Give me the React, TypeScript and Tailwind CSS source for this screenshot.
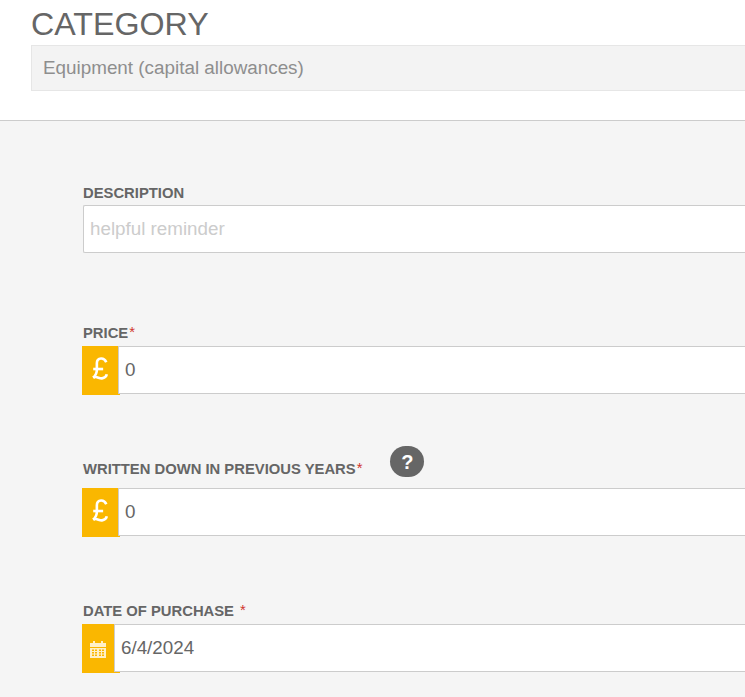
const font = { fontFamily: '"Liberation Sans", Arial, sans-serif' };

function Label({ text, star, gap }: { text: string; star?: boolean; gap?: boolean }) {
  return (
    <div className="flex h-[18px] items-center text-[14.8px] font-bold leading-[18px] text-[#666666]">
      <span>{text}</span>
      {star && (
        <span className={`font-normal text-[#d0342c] ${gap ? "ml-[6px]" : "ml-[1px]"} -mt-[3px]`}>*</span>
      )}
    </div>
  );
}

function PoundIcon() {
  return (
    <svg width="16" height="23" viewBox="0 0 15 22" fill="none" stroke="#ffffff" strokeWidth="2.500">
      <path d="M13.500 5C12.500 2.500 10.500 1.300 8.500 1.400C6 1.500 4.500 3.500 4.500 6V12C4.500 15 3.500 17.500 1 19.800" />
      <path d="M1 11.500H10.500" />
      <path d="M1 19.800C4 17.800 6.500 20.800 9.500 20.400C11.800 20.200 13.500 19 14 16.500" />
    </svg>
  );
}

function PoundInput() {
  return (
    <div className="flex">
      <div className="flex h-[49px] w-[38px] shrink-0 items-center justify-center bg-[#fab700] pb-[5px] pr-[2px] text-white">
        <PoundIcon />
      </div>
      <input
        readOnly
        value="0"
        className="relative -ml-[2px] h-[48px] min-w-0 flex-1 border border-r-0 border-[#cccccc] bg-white px-[6px] text-[18.8px] text-[#666666] outline-none"
      />
    </div>
  );
}

export default function App() {
  return (
    <div className="h-[697px] w-[745px] overflow-hidden bg-[#f5f5f5]" style={font}>
      <div className="h-[121px] border-b border-[#cccccc] bg-white pl-[31px]">
        <div className="h-[45px] pt-[6px] text-[32.2px] leading-[36px] text-[#666666]">CATEGORY</div>
        <div className="flex h-[46px] items-center border border-r-0 border-[#e6e6e6] bg-[#f3f3f3] pl-[11px] text-[18.850px] text-[#8e8e8e]">
          Equipment (capital allowances)
        </div>
      </div>

      <div className="pl-[83px]">
        <div className="pt-[63px]">
          <Label text="DESCRIPTION" />
          <input
            readOnly
            placeholder="helpful reminder"
            className="mt-[3px] block h-[48px] w-full rounded-l-[2px] border border-r-0 border-[#cccccc] bg-white px-[6px] text-[18.8px] text-[#666666] outline-none placeholder:text-[#cccccc]"
          />
        </div>

        <div className="-ml-[1px] pt-[71px]">
          <div className="pl-[1px]">
            <Label text="PRICE" star />
          </div>
          <div className="mt-[4px]">
            <PoundInput />
          </div>
        </div>

        <div className="-ml-[1px] pt-[51px]">
          <div className="flex items-end pl-[1px]">
            <Label text="WRITTEN DOWN IN PREVIOUS YEARS" star />
            <div className="mb-[1px] ml-[28px] flex h-[31px] w-[34px] items-center justify-center rounded-full bg-[#666666] text-[20px] font-bold text-white">
              ?
            </div>
          </div>
          <div className="mt-[10px]">
            <PoundInput />
          </div>
        </div>

        <div className="-ml-[1px] pt-[65px]">
          <div className="pl-[1px]">
            <Label text="DATE OF PURCHASE" star gap />
          </div>
          <div className="mt-[4px] flex">
            <div className="flex h-[49px] w-[38px] shrink-0 items-center justify-center bg-[#fab700] pr-[6px] pt-[1px]">
              <svg width="16" height="17" viewBox="0 0 16 17" fill="#fff0c8">
                <rect x="3" y="0" width="2" height="3" />
                <rect x="11" y="0" width="2" height="3" />
                <path d="M0 2h16v4H0z" />
                <path
                  fillRule="evenodd"
                  d="M0 7h16v10H0zM2 8.500v1.500h2V8.500zM5 8.500v1.500h2V8.500zM9 8.500v1.500h2V8.500zM12 8.500v1.500h2V8.500zM2 11v1.500h2V11zM5 11v1.500h2V11zM9 11v1.500h2V11zM12 11v1.500h2V11zM2 13.500V15h2v-1.500zM5 13.500V15h2v-1.500zM9 13.500V15h2v-1.500zM12 13.500V15h2v-1.500z"
                />
              </svg>
            </div>
            <input
              readOnly
              value="6/4/2024"
              className="relative -ml-[6px] h-[48px] min-w-0 flex-1 border border-r-0 border-[#cccccc] bg-white px-[6px] text-[18.8px] text-[#666666] outline-none"
            />
          </div>
        </div>
      </div>
    </div>
  );
}
